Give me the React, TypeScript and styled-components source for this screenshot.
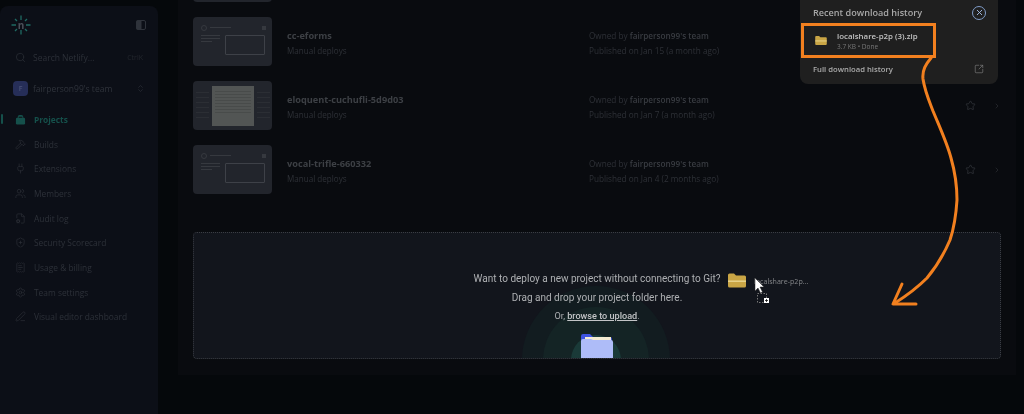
import React from "react";
import styled, { createGlobalStyle } from "styled-components";
import { Search, Hammer, Plug, Users, ShieldPlus, ReceiptText, Settings, PenLine, ChevronsUpDown, Star, ChevronRight, SquareArrowOutUpRight, FileCog, X } from "lucide-react";

const Global = createGlobalStyle`
  html, body { margin: 0; padding: 0; background: #05080b; }
  body { font-family: "Open Sans", "Noto Sans", "Liberation Sans", sans-serif; }
  * { box-sizing: border-box; }
`;

const Page = styled.div`
  position: relative;
  width: 1024px;
  height: 414px;
  overflow: hidden;
  display: grid;
  grid-template-columns: 158px 838px;
  column-gap: 20px;
  background: #05080b;
  filter: blur(0.45px);
`;

const Sidebar = styled.aside`
  margin-top: 6px;
  background: #0c0f17;
  border-radius: 8px 8px 0 0;
  display: flex;
  flex-direction: column;
`;

const LogoBar = styled.div`
  height: 38px;
  padding: 0 12px 0 11px;
  display: flex;
  align-items: center;
  justify-content: space-between;
`;

const LogoMark = styled.div`
  position: relative;
  width: 20px;
  height: 20px;
  display: flex;
  align-items: center;
  justify-content: center;
`;

const LogoLetter = styled.span`
  position: relative;
  font-size: 10px;
  font-weight: 700;
  line-height: 1;
  color: #4b5059;
`;

const LogoRays = styled.svg`
  position: absolute;
  inset: 0;
`;

const SearchRow = styled.div`
  margin-top: 3px;
  height: 20px;
  padding: 0 15px;
  display: flex;
  align-items: center;
  gap: 7px;
  color: #2c3038;
  font-size: 8.5px;
  svg { flex: none; }
`;

const SearchText = styled.span`
  flex: 1;
`;

const Hint = styled.span`
  font-size: 7px;
  color: #22262d;
`;

const TeamRow = styled.div`
  margin-top: 10px;
  height: 22px;
  padding: 0 13px;
  display: flex;
  align-items: center;
  gap: 5px;
  font-size: 8.5px;
  font-weight: 500;
  color: #2f333b;
`;

const TeamAvatar = styled.div`
  width: 15px;
  height: 15px;
  border-radius: 4px;
  background: #262e58;
  color: #4b5378;
  font-size: 7px;
  font-weight: 600;
  display: flex;
  align-items: center;
  justify-content: center;
`;

const TeamName = styled.span`
  flex: 1;
`;

const Nav = styled.nav`
  margin-top: 8px;
  display: flex;
  flex-direction: column;
`;

const NavRow = styled.div<{ $active?: boolean }>`
  position: relative;
  height: 24.7px;
  padding-left: 15px;
  display: flex;
  align-items: center;
  gap: 8px;
  font-size: 8.4px;
  font-weight: ${(p) => (p.$active ? 700 : 500)};
  color: ${(p) => (p.$active ? "#15504b" : "#2d3139")};
  svg { flex: none; }
  ${(p) =>
    p.$active &&
    `&::before { content: ""; position: absolute; left: 1px; top: 7px; width: 2px; height: 10px; background: #15504b; border-radius: 1px; }`}
`;

const Main = styled.main`
  align-self: start;
  height: 375px;
  background: #090b0f;
  padding: 0 15px;
  display: flex;
  flex-direction: column;
  overflow: hidden;
`;

const List = styled.div`
  margin-top: -47px;
  display: flex;
  flex-direction: column;
  gap: 15px;
`;

const Row = styled.div`
  height: 49px;
  display: grid;
  grid-template-columns: 79px 317px 1fr auto;
  align-items: center;
`;

const Thumb = styled.div`
  position: relative;
  height: 49px;
  border-radius: 4px;
  background: #22252c;
  overflow: hidden;
  padding: 8px 7px 0 8px;
`;

const ThumbHeader = styled.div`
  display: flex;
  align-items: center;
  gap: 3px;
  height: 5px;
  width: 65px;
  &::before { content: ""; width: 4px; height: 4px; border: 1px solid #36393f; border-radius: 50%; }
`;

const ThumbTitle = styled.span`
  flex: 1;
  height: 1px;
  margin-right: 28px;
  background: #36393f;
`;

const ThumbDot = styled.span`
  width: 4px;
  height: 4px;
  background: #36393f;
`;

const ThumbBody = styled.div`
  margin-top: 5px;
  display: grid;
  grid-template-columns: 19px 40px;
  column-gap: 5px;
`;

const ThumbLines = styled.div`
  display: flex;
  flex-direction: column;
  gap: 2px;
  span { height: 1px; background: #36393f; }
  span:last-child { width: 11px; }
`;

const ThumbBox = styled.div`
  height: 20px;
  border: 1px solid #3e4148;
  border-radius: 1px;
`;

const ShotThumb = styled(Thumb)`
  padding: 5px 3px 4px 3px;
  display: grid;
  grid-template-columns: 13px 42px 13px;
  column-gap: 3px;
`;

const ShotSide = styled.div`
  display: flex;
  flex-direction: column;
  gap: 4px;
  padding-top: 6px;
  span { height: 1px; background: #2b2e34; }
`;

const ShotCard = styled.div`
  height: 40px;
  background: #525554;
  padding: 5px 3px;
  display: flex;
  flex-direction: column;
  gap: 2px;
  span { height: 1px; background: #484b4a; }
`;

const NameCol = styled.div`
  padding: 4px 0 0 15px;
  display: flex;
  flex-direction: column;
  gap: 3px;
`;

const Name = styled.div`
  font-size: 9.2px;
  font-weight: 700;
  line-height: 12px;
  color: #3d4045;
`;

const Sub = styled.div`
  font-size: 8.1px;
  line-height: 12px;
  color: #2e3137;
`;

const OwnerCol = styled.div`
  padding-top: 4px;
  display: flex;
  flex-direction: column;
  gap: 3px;
`;

const Owner = styled.div`
  font-size: 8.2px;
  line-height: 12px;
  color: #2e3137;
  b { font-weight: 600; color: #393c42; }
`;

const Actions = styled.div`
  display: flex;
  align-items: center;
  gap: 17px;
  color: #36393f;
`;

const Drop = styled.section`
  position: relative;
  margin-top: 38px;
  height: 127px;
  background: #12151c;
  border: 1px dotted #3a3d43;
  border-radius: 4px;
  overflow: hidden;
  display: flex;
  flex-direction: column;
  align-items: center;
  padding-top: 37px;
  color: #aeb0b3;
  font-family: Roboto, "Open Sans", sans-serif;
  font-size: 10px;
`;

const DropLine = styled.div`
  position: relative;
  height: 18.5px;
  line-height: 18.5px;
  white-space: nowrap;
  z-index: 1;
`;

const SmallLine = styled(DropLine)`
  font-size: 9.1px;
  u { color: #c3c5c7; font-weight: 500; }
`;

const Ring = styled.div<{ $size: number; $color: string }>`
  position: absolute;
  left: 50%;
  top: 127px;
  width: ${(p) => p.$size}px;
  height: ${(p) => p.$size}px;
  margin-left: ${(p) => -p.$size / 2 - 1}px;
  margin-top: ${(p) => -p.$size / 2}px;
  border-radius: 50%;
  background: ${(p) => p.$color};
`;

const DropFolder = styled.svg`
  position: absolute;
  left: 386px;
  top: 100px;
`;

const Ghost = styled.div`
  position: absolute;
  left: 728px;
  top: 273px;
  display: flex;
  align-items: center;
  gap: 8px;
  color: #85878a;
  font-size: 7.1px;
`;

const DragBadge = styled.svg`
  position: absolute;
  left: 754px;
  top: 277px;
`;

const Popup = styled.div`
  position: absolute;
  left: 800px;
  top: 0;
  width: 198px;
  height: 84px;
  background: #1f1f1f;
  border-radius: 0 0 8px 8px;
  padding: 4px 12px 0 13px;
  color: #a8a8a8;
`;

const PopupHead = styled.div`
  height: 17px;
  display: flex;
  align-items: center;
  justify-content: space-between;
  font-size: 9.1px;
  font-weight: 600;
`;

const CloseRing = styled.div`
  width: 14px;
  height: 14px;
  border: 1.3px solid #7f9cc8;
  border-radius: 50%;
  display: flex;
  align-items: center;
  justify-content: center;
  color: #a8c0e6;
`;

const FileBox = styled.div`
  margin: 2px 0 0 -12px;
  width: 135px;
  height: 35px;
  border: 3px solid #f2801f;
  display: flex;
  align-items: center;
  padding-left: 11px;
  gap: 10px;
`;

const FileInfo = styled.div`
  display: flex;
  flex-direction: column;
`;

const FileName = styled.div`
  font-size: 7.9px;
  font-weight: 600;
  line-height: 11px;
  color: #c2c2c2;
`;

const FileMeta = styled.div`
  font-size: 6.5px;
  line-height: 9px;
  color: #777;
`;

const PopupFoot = styled.div`
  margin-top: 4px;
  height: 14px;
  display: flex;
  align-items: center;
  justify-content: space-between;
  font-size: 7.7px;
  font-weight: 600;
  color: #ababab;
  svg { color: #7d7d7d; margin-right: 2px; }
`;

const Overlay = styled.svg`
  position: absolute;
  left: 0;
  top: 0;
  pointer-events: none;
`;

const ProjectsIcon = () => (
  <svg width="11" height="11" viewBox="0 0 12 12" fill="#15504b">
    <path d="M3 4.5V3a2 2 0 0 1 2-2h2a2 2 0 0 1 2 2v1.5H8V3H4v1.5z" />
    <rect x="1" y="4" width="10" height="7.5" rx="1.4" />
  </svg>
);

const TeamFolder = ({ w, h }: { w: number; h: number }) => (
  <svg width={w} height={h} viewBox="0 0 18 14">
    <path d="M0 1.5A1.5 1.5 0 0 1 1.5 0H6l2 2h8.5A1.5 1.5 0 0 1 18 3.5V12.5A1.5 1.5 0 0 1 16.5 14h-15A1.5 1.5 0 0 1 0 12.5z" fill="#c9a545" />
    <rect x="0" y="7" width="18" height="1.4" fill="#e9d690" />
  </svg>
);

const navItems: [string, React.ReactNode][] = [
  ["Builds", <Hammer size={11} strokeWidth={1.4} />],
  ["Extensions", <Plug size={11} strokeWidth={1.4} />],
  ["Members", <Users size={11} strokeWidth={1.4} />],
  ["Audit log", <FileCog size={11} strokeWidth={1.4} />],
  ["Security Scorecard", <ShieldPlus size={11} strokeWidth={1.4} />],
  ["Usage & billing", <ReceiptText size={11} strokeWidth={1.4} />],
  ["Team settings", <Settings size={11} strokeWidth={1.4} />],
  ["Visual editor dashboard", <PenLine size={11} strokeWidth={1.4} />],
];

const WireThumb = () => (
  <Thumb>
    <ThumbHeader>
      <ThumbTitle />
      <ThumbDot />
    </ThumbHeader>
    <ThumbBody>
      <ThumbLines>
        <span />
        <span />
        <span />
      </ThumbLines>
      <ThumbBox />
    </ThumbBody>
  </Thumb>
);

const PhotoThumb = () => (
  <ShotThumb>
    <ShotSide>
      {[0, 1, 2, 3, 4, 5].map((i) => (
        <span key={i} />
      ))}
    </ShotSide>
    <ShotCard>
      {[0, 1, 2, 3, 4, 5, 6, 7].map((i) => (
        <span key={i} />
      ))}
    </ShotCard>
    <ShotSide>
      {[0, 1, 2, 3, 4, 5].map((i) => (
        <span key={i} />
      ))}
    </ShotSide>
  </ShotThumb>
);

const projects = [
  { name: "cc-eforms", date: "Jan 15 (a month ago)", photo: false },
  { name: "eloquent-cuchufli-5d9d03", date: "Jan 7 (a month ago)", photo: true },
  { name: "vocal-trifle-660332", date: "Jan 4 (2 months ago)", photo: false },
];

export default function App() {
  return (
    <Page>
      <Global />
      <Sidebar>
        <LogoBar>
          <LogoMark>
            <LogoRays width="20" height="20" viewBox="0 0 20 20" stroke="#1f6a63" strokeWidth="1.3">
              <path d="M10 0.5V5M10 15V19.5M0.5 10H5M15 10H19.5M4 4l2 2M16 4l-2 2M4 16l2-2M16 16l-2-2" />
            </LogoRays>
            <LogoLetter>n</LogoLetter>
          </LogoMark>
          <svg width="10" height="10" viewBox="0 0 10 10">
            <rect x="0.5" y="0.5" width="9" height="9" rx="1.5" fill="none" stroke="#2f333b" />
            <rect x="0.5" y="0.5" width="5" height="9" fill="#2f333b" />
          </svg>
        </LogoBar>
        <SearchRow>
          <Search size={11} strokeWidth={1.5} />
          <SearchText>Search Netlify...</SearchText>
          <Hint>CtrlK</Hint>
        </SearchRow>
        <TeamRow>
          <TeamAvatar>F</TeamAvatar>
          <TeamName>fairperson99's team</TeamName>
          <ChevronsUpDown size={9} strokeWidth={1.6} />
        </TeamRow>
        <Nav>
          <NavRow $active>
            <ProjectsIcon />
            Projects
          </NavRow>
          {navItems.map(([label, icon]) => (
            <NavRow key={label}>
              {icon}
              {label}
            </NavRow>
          ))}
        </Nav>
      </Sidebar>

      <Main>
        <List>
          <Row>
            <WireThumb />
          </Row>
          {projects.map((p) => (
            <Row key={p.name}>
              {p.photo ? <PhotoThumb /> : <WireThumb />}
              <NameCol>
                <Name>{p.name}</Name>
                <Sub>Manual deploys</Sub>
              </NameCol>
              <OwnerCol>
                <Owner>
                  Owned by <b>fairperson99's team</b>
                </Owner>
                <Owner>Published on {p.date}</Owner>
              </OwnerCol>
              <Actions>
                <Star size={11} strokeWidth={1.5} />
                <ChevronRight size={8} strokeWidth={1.6} />
              </Actions>
            </Row>
          ))}
        </List>
        <Drop>
          <Ring $size={148} $color="#121c20" />
          <Ring $size={106} $color="#142425" />
          <Ring $size={50} $color="#1a3a38" />
          <DropFolder width="34" height="26" viewBox="0 0 34 26">
            <path d="M1 3a2 2 0 0 1 2-2h7l3 3h17a2 2 0 0 1 2 2v6H1z" fill="#3e54e0" />
            <rect x="5" y="4" width="26" height="8" fill="#f4ecd2" />
            <path d="M1 8a2 2 0 0 1 2-2h8l2 1h18a2 2 0 0 1 2 2v17H1z" fill="#aebcf8" />
          </DropFolder>
          <DropLine>Want to deploy a new project without connecting to Git?</DropLine>
          <DropLine>Drag and drop your project folder here.</DropLine>
          <SmallLine>
            Or, <u>browse to upload</u>.
          </SmallLine>
        </Drop>
      </Main>

      <Popup>
        <PopupHead>
          Recent download history
          <CloseRing>
            <X size={9} strokeWidth={2.4} />
          </CloseRing>
        </PopupHead>
        <FileBox>
          <TeamFolder w={12} h={9} />
          <FileInfo>
            <FileName>localshare-p2p (3).zip</FileName>
            <FileMeta>3.7 KB • Done</FileMeta>
          </FileInfo>
        </FileBox>
        <PopupFoot>
          Full download history
          <SquareArrowOutUpRight size={10} strokeWidth={1.6} />
        </PopupFoot>
      </Popup>

      <Ghost>
        <TeamFolder w={18} h={15} />
        <span>localshare-p2p...</span>
      </Ghost>
      <DragBadge width="24" height="28" viewBox="0 0 24 28">
        <rect x="3.5" y="16.5" width="9" height="9" fill="none" stroke="#777" strokeDasharray="1.5 1.5" />
        <rect x="10" y="21" width="5" height="5" fill="#fff" />
        <path d="M12.5 22v3M11 23.5h3" stroke="#111" strokeWidth="0.8" />
        <path d="M1 1v13l3-3 2.5 5 2-1-2.5-5h4z" fill="#fff" stroke="#222" strokeWidth="0.5" />
      </DragBadge>

      <Overlay width="1024" height="414" viewBox="0 0 1024 414" fill="none" stroke="#f2801f" strokeWidth="3" strokeLinecap="round" strokeLinejoin="round">
        <path d="M931 58C926 64 922 70 923 79C925 92 930 103 933 111C940 128 947 143 951 158C955 172 957 186 957 200C956 216 954 228 950 240C944 254 937 266 927 278C917 288 906 296 895 303" />
        <path d="M902 284L893 304L916 304" />
      </Overlay>
    </Page>
  );
}
